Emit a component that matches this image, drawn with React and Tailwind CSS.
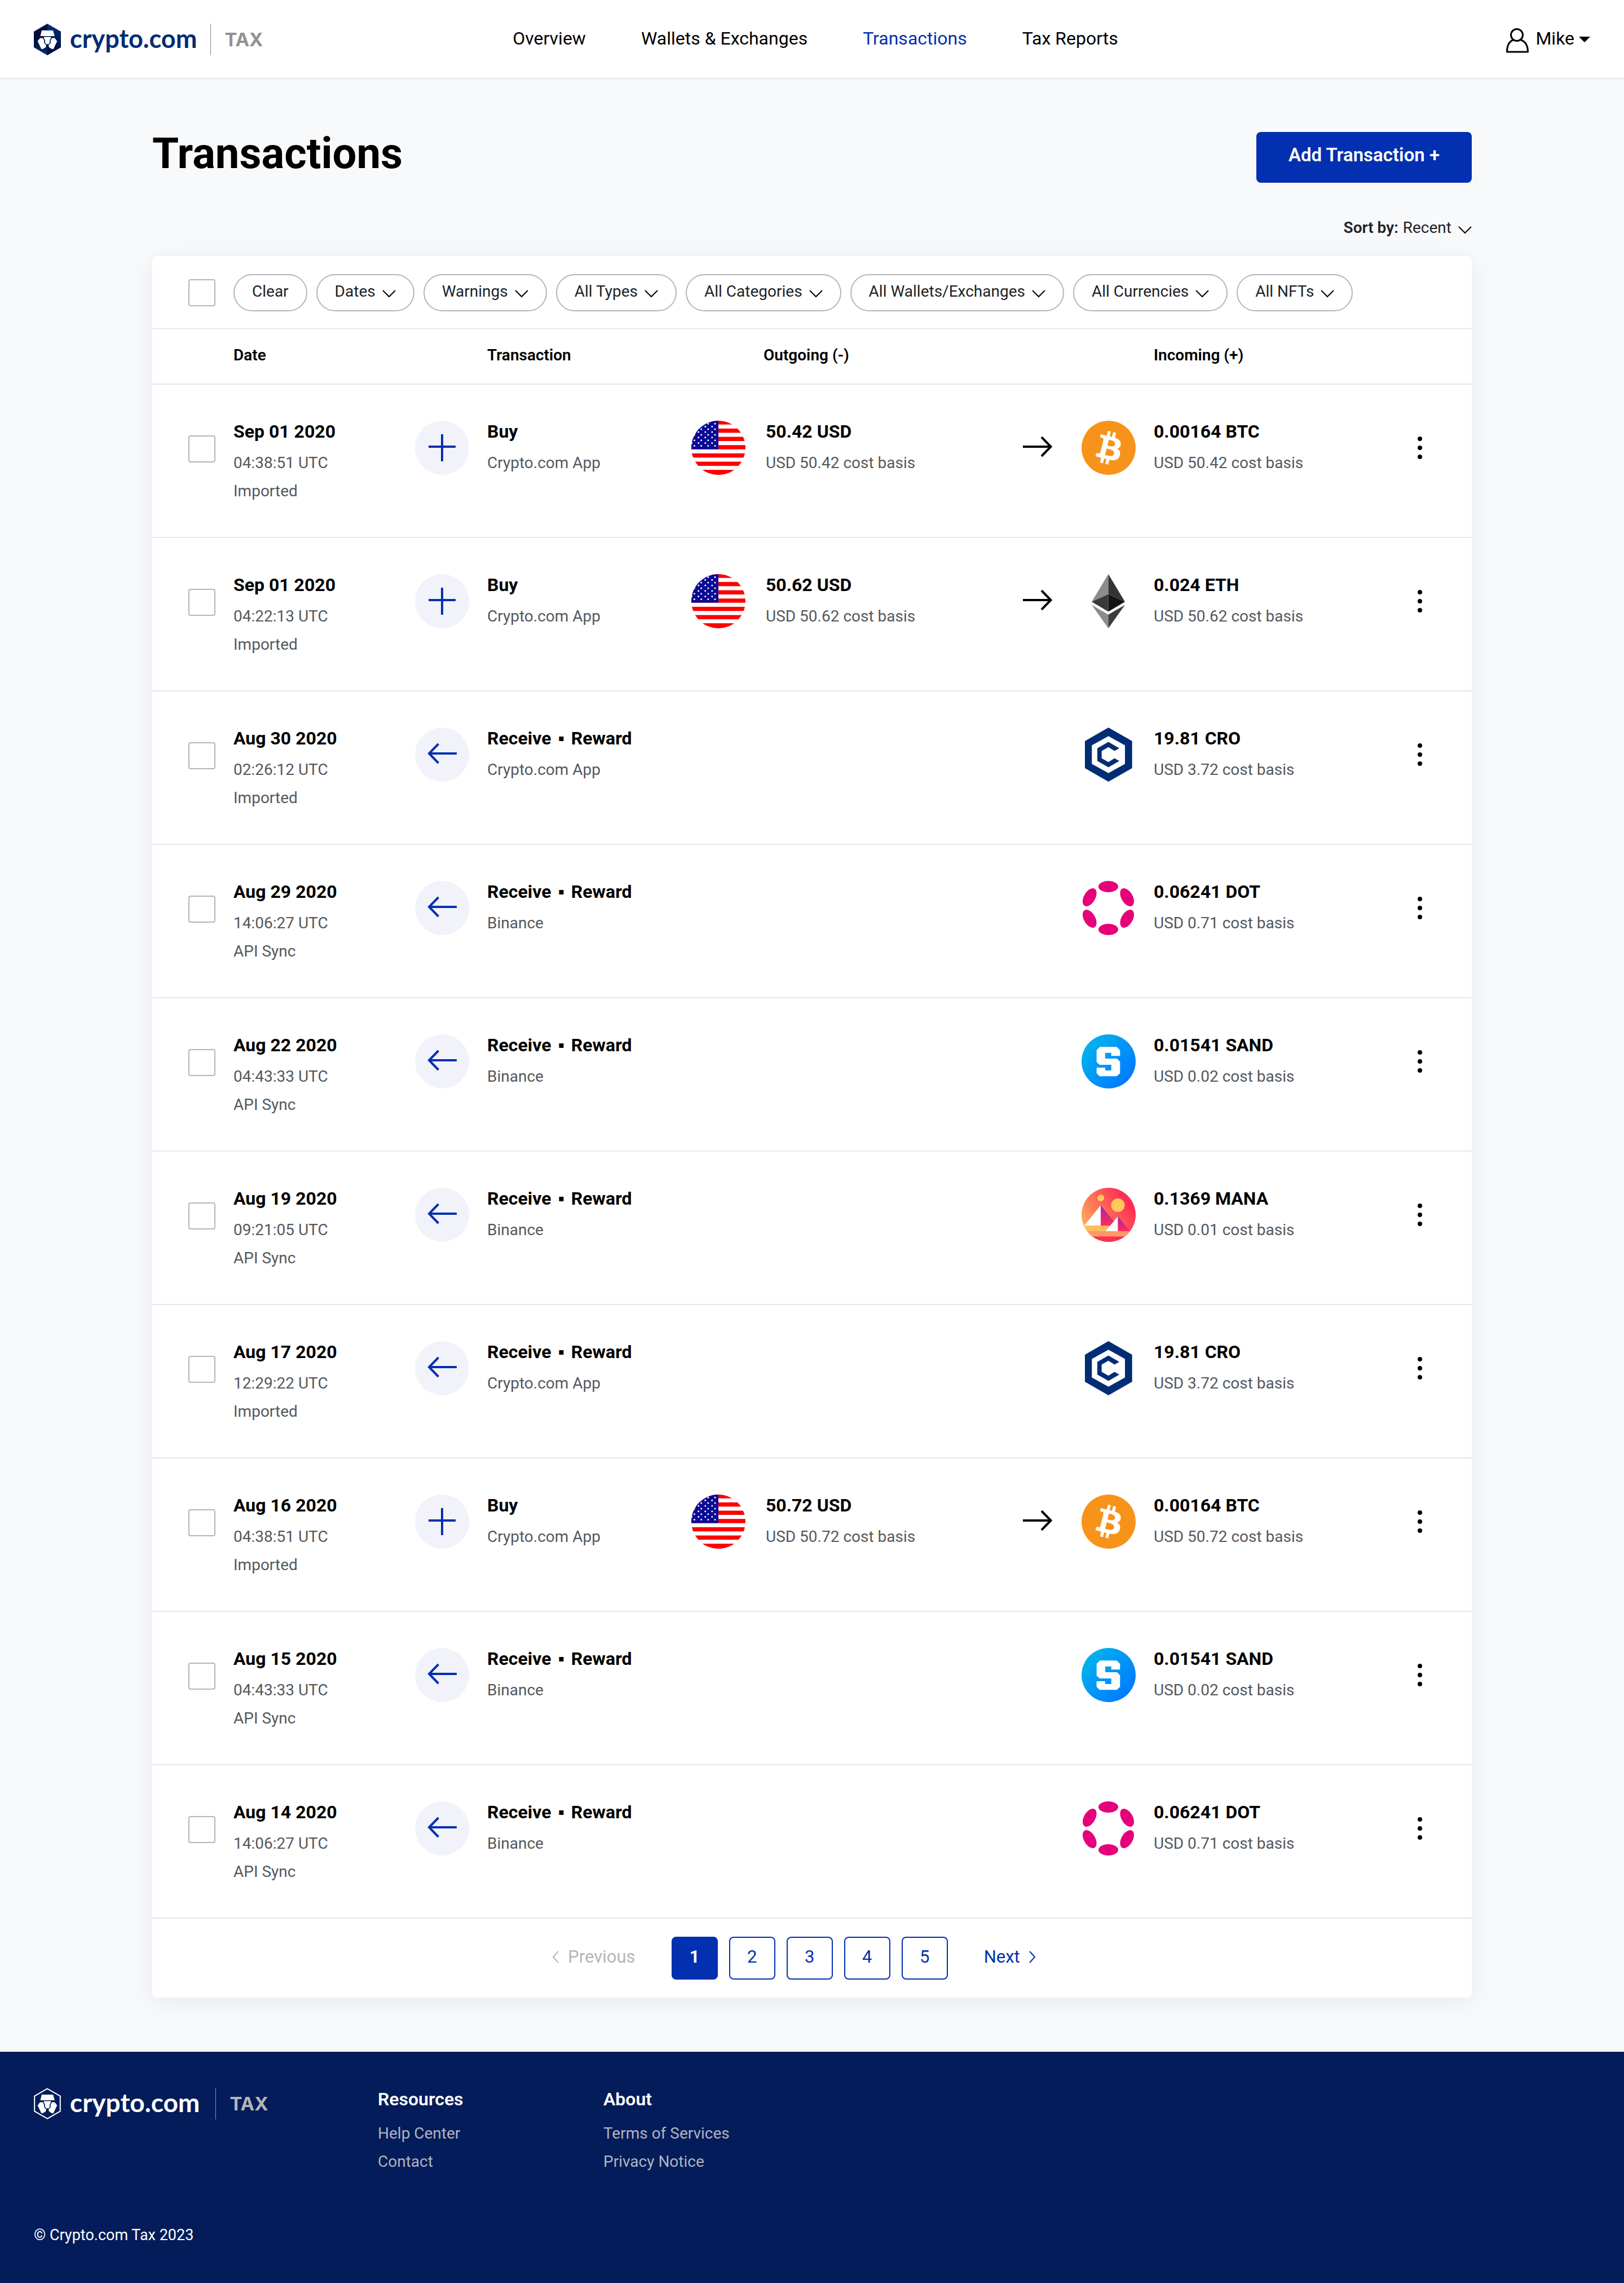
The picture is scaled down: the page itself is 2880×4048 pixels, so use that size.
import React from "react";

const NAV = ["Overview", "Wallets & Exchanges", "Transactions", "Tax Reports"];

const FILTERS = [
  "Dates",
  "Warnings",
  "All Types",
  "All Categories",
  "All Wallets/Exchanges",
  "All Currencies",
  "All NFTs",
];

const buy = (date, time, out, coin, amount) => ({
  date,
  time,
  source: "Imported",
  kind: "buy",
  title: "Buy",
  place: "Crypto.com App",
  out: { amount: out + " USD", basis: "USD " + out + " cost basis" },
  coin,
  amount,
  basis: "USD " + out + " cost basis",
});

const REWARD_TITLE = (
  <>
    Receive <span className="mx-1">▪</span> Reward
  </>
);

const reward = (date, time, source, place, coin, amount, cost) => ({
  date,
  time,
  source,
  kind: "receive",
  title: REWARD_TITLE,
  place,
  coin,
  amount,
  basis: "USD " + cost + " cost basis",
});

const ROWS = [
  buy("Sep 01 2020", "04:38:51 UTC", "50.42", "btc", "0.00164 BTC"),
  buy("Sep 01 2020", "04:22:13 UTC", "50.62", "eth", "0.024 ETH"),
  reward("Aug 30 2020", "02:26:12 UTC", "Imported", "Crypto.com App", "cro", "19.81 CRO", "3.72"),
  reward("Aug 29 2020", "14:06:27 UTC", "API Sync", "Binance", "dot", "0.06241 DOT", "0.71"),
  reward("Aug 22 2020", "04:43:33 UTC", "API Sync", "Binance", "sand", "0.01541 SAND", "0.02"),
  reward("Aug 19 2020", "09:21:05 UTC", "API Sync", "Binance", "mana", "0.1369 MANA", "0.01"),
  reward("Aug 17 2020", "12:29:22 UTC", "Imported", "Crypto.com App", "cro", "19.81 CRO", "3.72"),
  buy("Aug 16 2020", "04:38:51 UTC", "50.72", "btc", "0.00164 BTC"),
  reward("Aug 15 2020", "04:43:33 UTC", "API Sync", "Binance", "sand", "0.01541 SAND", "0.02"),
  reward("Aug 14 2020", "14:06:27 UTC", "API Sync", "Binance", "dot", "0.06241 DOT", "0.71"),
];

function LionPieces() {
  return (
    <g fill="#fff">
      <path d="M14 12h20l3 10H11.500z" />
      <path d="M17.500 23.500h13l-.8 3.500-1.200 1-.7 6-1.300 2.200h-5l-1.300-2.200-.7-6-1.200-1z" />
      <path d="M6.700 31 11 25.500h5l1.800 3.200.8 6.300 3.400 3.200-1.300 4L15.500 45l-2.300-.3z" />
      <path d="M41.300 31 37 25.500h-5l-1.800 3.200-.8 6.300-3.400 3.200 1.300 4 5.200 2.800 2.300-.3z" />
    </g>
  );
}

function HexLogo({ outline }) {
  return (
    <svg viewBox="0 0 48 56" className="h-14 w-12 shrink-0" aria-hidden="true">
      {outline ? (
        <path d="M24 1.500 46.800 14.700v26.600L24 54.500 1.200 41.300V14.700z" fill="none" stroke="#fff" strokeWidth="2" />
      ) : (
        <>
          <defs>
            <linearGradient id="hexLeft" x1="0" y1="0" x2="0" y2="1">
              <stop offset="0" stopColor="#03154a" />
              <stop offset="0.45" stopColor="#020a33" />
              <stop offset="1" stopColor="#032f73" />
            </linearGradient>
            <linearGradient id="hexRight" x1="0" y1="0" x2="0" y2="1">
              <stop offset="0" stopColor="#033078" />
              <stop offset="1" stopColor="#020936" />
            </linearGradient>
          </defs>
          <path d="M24 0v56L0 42V14z" fill="url(#hexLeft)" />
          <path d="M24 0v56l24-14V14z" fill="url(#hexRight)" />
        </>
      )}
      <LionPieces />
    </svg>
  );
}

function Brand({ dark }) {
  return (
    <a href="#home" className="flex items-center">
      <HexLogo outline={dark} />
      <span
        className={
          "ml-4 -mt-1 font-['Lato',sans-serif] leading-[56px] font-bold " +
          (dark ? "text-[46px] text-white" : "text-[45px] text-[#002d74]")
        }
      >
        crypto.com
      </span>
      <span className={"h-14 border-l " + (dark ? "ml-7 border-[#8b93a8]" : "ml-6 border-[#8a8c8e]")} />
      <span
        className={
          "ml-6 font-['Inter',sans-serif] text-[33px] leading-[56px] font-bold " +
          (dark ? "text-[#b4b6b9]" : "text-[#8f9193]")
        }
      >
        TAX
      </span>
    </a>
  );
}

function Chevron({ className }) {
  return (
    <svg viewBox="0 0 24 14" className={"h-[14px] w-6 shrink-0 " + className} fill="none" stroke="#000" strokeWidth="2" aria-hidden="true">
      <path d="m1 1 11 11L23 1" />
    </svg>
  );
}

function SideChevron({ flip }) {
  return (
    <svg viewBox="0 0 12 22" className="mb-1 h-[22px] w-3 shrink-0" fill="none" stroke="currentColor" strokeWidth="2" aria-hidden="true">
      <path d={flip ? "M11 1 2 11l9 10" : "m1 1 9 10-9 10"} />
    </svg>
  );
}

function UserIcon() {
  return (
    <svg viewBox="0 0 40 44" className="mt-1 h-11 w-10" fill="none" stroke="#000" strokeWidth="3" strokeLinejoin="round" aria-hidden="true">
      <ellipse cx="19" cy="12" rx="10.500" ry="10.500" />
      <path d="M13 20.500C5.500 23.500 1.500 31 1.500 42h37C38.500 31 34 23.500 25.500 20.500" />
    </svg>
  );
}

function KindIcon({ kind }) {
  return (
    <svg viewBox="0 0 96 96" className="size-24 shrink-0" fill="none" stroke="#0330b0" strokeWidth="4" aria-hidden="true">
      <circle cx="48" cy="48" r="48" fill="#f2f3fa" stroke="none" />
      {kind === "buy" ? <path d="M24 46h48M48 24v48" /> : <path d="M74 46H24M41.500 29 25 46l16.500 17" />}
    </svg>
  );
}

const STAR_ROWS = [0, 1, 2, 3, 4, 5, 6, 7, 8];

function Flag() {
  return (
    <svg viewBox="0 0 96 96" className="size-24 shrink-0 rounded-full" aria-hidden="true">
      <rect width="96" height="96" fill="#fff" />
      {[0, 1, 2, 3, 4, 5, 6].map((k) => (
        <rect key={k} x="0" y={k * 14.67 - 0.8} width="96" height="7.500" fill="#fe0000" />
      ))}
      <rect y="87.500" width="96" height="9" fill="#fe0000" />
      <rect width="48" height="50.500" fill="#090a96" />
      {STAR_ROWS.map((r) =>
        (r % 2 ? [0.7, 12.7, 24.8, 36.8] : [5.4, 17.6, 29.8, 42]).map((x) => (
          <circle key={r + "-" + x} cx={x} cy={5.3 + r * 4.9} r="1.500" fill="#fff" />
        ))
      )}
    </svg>
  );
}

function Btc() {
  return (
    <svg viewBox="0 0 32 32" className="size-24 shrink-0" aria-hidden="true">
      <circle cx="16" cy="16" r="16" fill="#f7931a" />
      <path
        fill="#fff"
        d="M23.189 14.02c.314-2.096-1.283-3.223-3.465-3.975l.708-2.84-1.728-.43-.69 2.765c-.454-.114-.92-.22-1.385-.326l.695-2.783L15.596 6l-.708 2.839c-.376-.086-.746-.17-1.104-.26l.002-.009-2.384-.595-.46 1.846s1.283.294 1.256.312c.7.175.826.638.805 1.006l-.806 3.235c.048.012.11.03.18.057l-.183-.045-1.130 4.532c-.086.212-.303.531-.793.41.018.025-1.256-.313-1.256-.313l-.858 1.978 2.250.561c.418.105.828.215 1.231.318l-.715 2.872 1.727.43.708-2.840c.472.127.93.245 1.378.357l-.706 2.828 1.728.43.715-2.866c2.948.558 5.164.333 6.097-2.333.752-2.146-.037-3.385-1.588-4.192 1.130-.26 1.980-1.003 2.207-2.538zm-3.950 5.538c-.533 2.147-4.148.986-5.320.695l.95-3.805c1.172.293 4.929.872 4.370 3.110zm.535-5.569c-.487 1.953-3.495.96-4.470.717l.86-3.450c.975.243 4.118.696 3.610 2.733z"
      />
    </svg>
  );
}

function Eth() {
  return (
    <svg viewBox="0 0 96 96" className="size-24 shrink-0" aria-hidden="true">
      <path d="M47.500 0 18 49l29.500-13.500z" fill="#8c8c8c" />
      <path d="M47.500 0 77 49 47.500 35.500z" fill="#343434" />
      <path d="M18 49l29.500-13.500v31z" fill="#393939" />
      <path d="M77 49 47.500 35.500v31z" fill="#141414" />
      <path d="m18 54.500 29.500 17.200V96z" fill="#8c8c8c" />
      <path d="M77 54.500 47.500 71.700V96z" fill="#3c3c3b" />
    </svg>
  );
}

function Cro() {
  return (
    <svg viewBox="0 0 96 96" className="size-24 shrink-0" fill="#002d74" aria-hidden="true">
      <path fillRule="evenodd" d="M47.700 0 89.700 24v48L47.700 96 6 72V24zM47.700 15.200 18.300 31.500v33L47.700 80.800 77 64.500v-33z" />
      <path d="M47.700 25.600 67 36.700l-8.500 4.900-10.800-6.800-12 6.800v12.800l12 6.800 10.800-6.800 8.500 4.900-19.300 11.100L28 59.300V36.700z" />
    </svg>
  );
}

function Dot() {
  return (
    <svg viewBox="0 0 96 96" className="size-24 shrink-0" fill="#e6007a" aria-hidden="true">
      <ellipse cx="47.500" cy="10" rx="17.500" ry="10" />
      <ellipse cx="47.500" cy="86" rx="17.500" ry="10" />
      <ellipse cx="14.300" cy="29" rx="17.500" ry="10" transform="rotate(-60 14.300 29)" />
      <ellipse cx="80.700" cy="67" rx="17.500" ry="10" transform="rotate(-60 80.700 67)" />
      <ellipse cx="14.300" cy="67" rx="17.500" ry="10" transform="rotate(60 14.300 67)" />
      <ellipse cx="80.700" cy="29" rx="17.500" ry="10" transform="rotate(60 80.700 29)" />
    </svg>
  );
}

function Sand() {
  return (
    <svg viewBox="0 0 96 96" className="size-24 shrink-0" aria-hidden="true">
      <defs>
        <linearGradient id="sandFill" x1="0.100" y1="0.150" x2="0.900" y2="0.850">
          <stop offset="0" stopColor="#01b3ec" />
          <stop offset="1" stopColor="#0179ff" />
        </linearGradient>
      </defs>
      <circle cx="48" cy="48" r="48" fill="url(#sandFill)" />
      <path
        fill="#fff"
        d="M32.700 22.300h29.600l6 6v10H52.700v-5.600H42V43h21l5.300 5.500V69l-5.800 5.300H32L26.700 69V59H42v5h10.700V54H32l-5.300-5V28z"
      />
    </svg>
  );
}

function Mana() {
  return (
    <svg viewBox="0 0 96 96" className="size-24 shrink-0 rounded-full" aria-hidden="true">
      <defs>
        <linearGradient id="manaSky" x1="0.050" y1="0.800" x2="0.850" y2="0.250">
          <stop offset="0" stopColor="#ffb15c" />
          <stop offset="1" stopColor="#ff2d55" />
        </linearGradient>
        <linearGradient id="manaShade" x1="0" y1="0" x2="0" y2="1">
          <stop offset="0" stopColor="#a524b3" />
          <stop offset="1" stopColor="#ff2d55" />
        </linearGradient>
      </defs>
      <rect width="96" height="96" fill="url(#manaSky)" />
      <circle cx="34" cy="18" r="6" fill="#ffc95b" />
      <circle cx="64.500" cy="31" r="12" fill="#ffc95b" />
      <path d="M34 31.300v36H4.500z" fill="#fff" />
      <path d="M34 31.300v36h30z" fill="url(#manaShade)" />
      <path d="M0 67.300h51L43 77H0z" fill="#ffbc5b" />
      <path d="M64.500 50.700V77H42.500z" fill="#fff" />
      <path d="M64.500 50.700V77H86z" fill="url(#manaShade)" />
      <path d="M0 77h96v10H0z" fill="#fc9965" />
      <path d="M0 86.500h96V96H0z" fill="#ff2d55" />
    </svg>
  );
}

const COINS = { btc: Btc, eth: Eth, cro: Cro, dot: Dot, sand: Sand, mana: Mana };

function CheckBox({ label }) {
  return (
    <input
      type="checkbox"
      aria-label={label}
      className="block size-12 shrink-0 appearance-none rounded-sm border-2 border-[#b4b6b9] bg-white checked:bg-[#0330b0]"
    />
  );
}

function Lines({ title, lines }) {
  return (
    <div>
      <p className="text-[32px] leading-[62px] font-bold text-black">{title}</p>
      {lines.map((line) => (
        <p key={line} className="text-[28px] leading-[50px] text-[#55585b]">
          {line}
        </p>
      ))}
    </div>
  );
}

function Entry({ icon, title, lines, wide }) {
  return (
    <div className={wide ? "flex gap-9" : "flex gap-8"}>
      <div className="pt-3">{icon}</div>
      <Lines title={title} lines={lines} />
    </div>
  );
}

function Row({ row }) {
  const Coin = COINS[row.coin];
  return (
    <tr className="border-b-2 border-[#e6e7e9] align-top">
      <td className="pt-[90px] pl-16">
        <CheckBox label={"Select transaction of " + row.date} />
      </td>
      <td className="pt-[52px] pb-14">
        <Lines title={row.date} lines={[row.time, row.source]} />
      </td>
      <td className="pt-[52px]">
        <Entry icon={<KindIcon kind={row.kind} />} title={row.title} lines={[row.place]} />
      </td>
      <td className="pt-[52px]">
        {row.out && <Entry wide icon={<Flag />} title={row.out.amount} lines={[row.out.basis]} />}
      </td>
      <td className="pt-[92px]">
        {row.out && (
          <svg viewBox="0 0 52 36" className="h-9 w-[52px]" fill="none" stroke="#000" strokeWidth="4" role="img" aria-label="to">
            <path d="M0 18h49M33 1l16.500 17L33 35" />
          </svg>
        )}
      </td>
      <td className="pt-[52px]">
        <Entry icon={<Coin />} title={row.amount} lines={[row.basis]} />
      </td>
      <td className="pt-[88px]">
        <button type="button" aria-label="More actions" className="flex h-12 w-12 flex-col items-center justify-center gap-2">
          <span className="size-2 rounded-full bg-black" />
          <span className="size-2 rounded-full bg-black" />
          <span className="size-2 rounded-full bg-black" />
        </button>
      </td>
    </tr>
  );
}

function FooterColumn({ title, links }) {
  return (
    <div className="w-[400px]">
      <h2 className="text-[32px] leading-[72px] font-semibold text-white">{title}</h2>
      <ul>
        {links.map((link) => (
          <li key={link}>
            <a href="#info" className="block text-[28px] leading-[50px] text-[#b0b5c0]">
              {link}
            </a>
          </li>
        ))}
      </ul>
    </div>
  );
}

export default function App() {
  return (
    <div className="flex min-h-screen flex-col bg-[#f8f9fb] font-['Roboto',sans-serif] text-black">
      <header className="grid grid-cols-[1fr_auto_1fr] items-center border-b-2 border-[#e6e7e9] bg-white px-15 pt-[42px] pb-10">
        <Brand />
        <nav className="flex gap-[98px] pb-1 pl-3 text-[32px] leading-[40px]">
          {NAV.map((item) => (
            <a key={item} href="#nav" className={item === "Transactions" ? "text-[#0330b0]" : "text-black"}>
              {item}
            </a>
          ))}
        </nav>
        <button type="button" className="flex items-center justify-self-end text-[32px] leading-[40px]">
          <UserIcon />
          <span className="mr-2 mb-1 ml-3">Mike</span>
          <svg viewBox="0 0 20 10" className="h-[10px] w-5" aria-hidden="true">
            <path d="M0 0h20L10 10z" />
          </svg>
        </button>
      </header>

      <main className="mx-auto w-full max-w-[2340px] grow pt-[94px] pb-24">
        <div className="flex items-start justify-between">
          <h1 className="text-[76px] leading-[76px] font-bold">Transactions</h1>
          <button
            type="button"
            className="h-[90px] w-[382px] rounded-lg bg-[#0330b0] pb-2 text-[33px] leading-[40px] font-semibold text-white"
          >
            Add Transaction +
          </button>
        </div>

        <label className="mt-[60px] flex items-center justify-end text-[28px] leading-[40px] text-[#202326]">
          <span className="mr-2 font-semibold">Sort by:</span>
          <select className="field-sizing-content h-10 appearance-none bg-transparent">
            <option>Recent</option>
          </select>
          <Chevron className="mt-2 ml-3" />
        </label>

        <section className="mt-[30px] rounded-lg bg-white shadow-[0_6px_44px_rgba(20,30,50,0.07)]">
          <div className="flex items-center border-b-2 border-[#e6e7e9] pt-8 pb-[30px] pl-16">
            <CheckBox label="Select all transactions" />
            <div className="ml-8 flex flex-wrap gap-4 text-[28px] leading-[40px] text-[#202326]">
              <button type="button" className="h-[66px] rounded-full border-2 border-[#b4b6b9] px-[31px] pb-1">
                Clear
              </button>
              {FILTERS.map((filter) => (
                <label key={filter} className="flex h-[66px] items-center rounded-full border-2 border-[#b4b6b9] px-[31px] pb-1">
                  <select aria-label={filter} className="field-sizing-content h-10 appearance-none bg-transparent">
                    <option>{filter}</option>
                  </select>
                  <Chevron className="mt-2 ml-3" />
                </label>
              ))}
            </div>
          </div>

          <table className="w-full table-fixed text-left">
            <thead>
              <tr className="h-[97px] border-b-2 border-[#e6e7e9] text-[28px] leading-[40px]">
                <th className="w-36" aria-label="Select" />
                <th className="w-[322px] pb-1 font-semibold">Date</th>
                <th className="w-[490px] pb-1 pl-32 font-semibold">Transaction</th>
                <th className="w-[588px] pb-1 pl-32 font-semibold">Outgoing (-)</th>
                <th className="w-[104px]" aria-label="Direction" />
                <th className="w-[576px] pb-1 pl-32 font-semibold">Incoming (+)</th>
                <th aria-label="Actions" />
              </tr>
            </thead>
            <tbody>
              {ROWS.map((row) => (
                <Row key={row.date + row.time} row={row} />
              ))}
            </tbody>
          </table>

          <nav aria-label="Pagination" className="flex items-center justify-center py-8 pr-16 text-[31px] leading-[40px]">
            <button type="button" disabled className="flex items-center text-[#b4b6b9]">
              <SideChevron flip />
              <span className="mb-1 ml-4">Previous</span>
            </button>
            <div className="mx-16 flex gap-5">
              {[1, 2, 3, 4, 5].map((page) => (
                <button
                  key={page}
                  type="button"
                  className={
                    "h-[76px] w-[82px] rounded-lg border-2 border-[#0330b0] pb-1 " +
                    (page === 1 ? "bg-[#0330b0] font-bold text-white" : "text-[#0330b0]")
                  }
                >
                  {page}
                </button>
              ))}
            </div>
            <button type="button" className="flex items-center text-[#0330b0]">
              <span className="mr-4 mb-1">Next</span>
              <SideChevron />
            </button>
          </nav>
        </section>
      </main>

      <footer className="bg-[#041c59] px-15 pt-12 pb-15">
        <div className="flex">
          <div className="w-[610px] pt-4">
            <Brand dark />
          </div>
          <FooterColumn title="Resources" links={["Help Center", "Contact"]} />
          <FooterColumn title="About" links={["Terms of Services", "Privacy Notice"]} />
        </div>
        <p className="mt-20 text-[27px] leading-[50px] text-white">© Crypto.com Tax 2023</p>
      </footer>
    </div>
  );
}
